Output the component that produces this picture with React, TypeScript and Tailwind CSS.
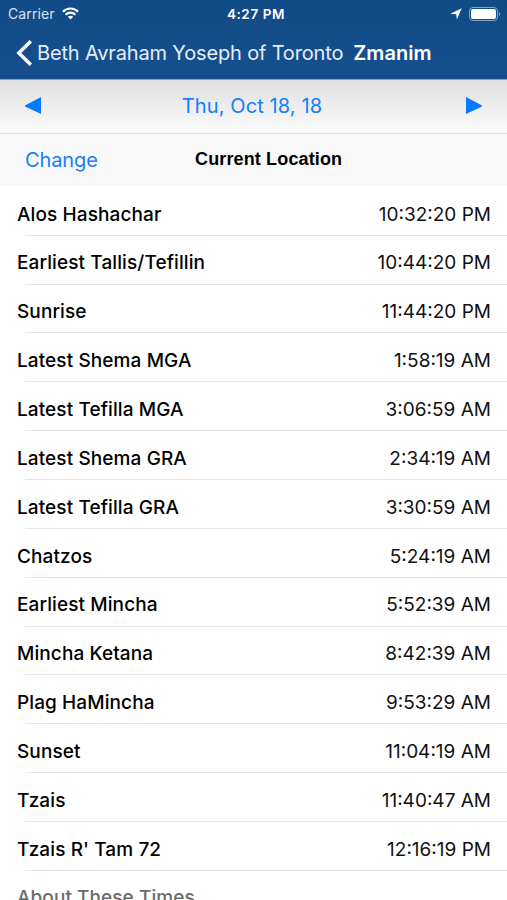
type Zman = {
  name: string;
  time: string;
};

const zmanim: Array<Zman> = [
  { name: "Alos Hashachar", time: "10:32:20 PM" },
  { name: "Earliest Tallis/Tefillin", time: "10:44:20 PM" },
  { name: "Sunrise", time: "11:44:20 PM" },
  { name: "Latest Shema MGA", time: "1:58:19 AM" },
  { name: "Latest Tefilla MGA", time: "3:06:59 AM" },
  { name: "Latest Shema GRA", time: "2:34:19 AM" },
  { name: "Latest Tefilla GRA", time: "3:30:59 AM" },
  { name: "Chatzos", time: "5:24:19 AM" },
  { name: "Earliest Mincha", time: "5:52:39 AM" },
  { name: "Mincha Ketana", time: "8:42:39 AM" },
  { name: "Plag HaMincha", time: "9:53:29 AM" },
  { name: "Sunset", time: "11:04:19 AM" },
  { name: "Tzais", time: "11:40:47 AM" },
  { name: "Tzais R' Tam 72", time: "12:16:19 PM" },
];

const StatusBar = () => {
  return (
    <div className="grid h-[27px] grid-cols-[1fr_auto_1fr] items-center pl-[8px] pr-[6px] text-white">
      <div className="flex items-center gap-[7px]">
        <span className="text-[14px] tracking-[0.1px] text-[#d5e4f5]">Carrier</span>
        <svg className="h-[13px] w-[17px]" viewBox="0 0 17 13" fill="none" stroke="currentColor" strokeWidth="2.2">
          <path d="M.9 4.8C5 .4 12 .4 16.1 4.8" />
          <path d="M3.6 7.8C6.5 4.9 10.5 4.9 13.4 7.8" />
          <path d="M8.5 12.4 5.8 9.7C7.3 8.4 9.7 8.4 11.2 9.7Z" fill="currentColor" stroke="none" />
        </svg>
      </div>
      <span className="pl-[3px] pt-px text-center text-[13.5px] font-semibold tracking-[0.6px]">4:27 PM</span>
      <div className="flex items-center justify-end gap-[7px]">
        <svg className="h-[12px] w-[12px]" viewBox="0 0 12 12" fill="currentColor">
          <path d="M11.7 .3 6.9 11.5 6.2 6.2 .3 5.7Z" />
        </svg>
        <svg className="h-[14px] w-[32px]" viewBox="0 0 32 14">
          <rect x=".5" y=".5" width="28" height="13" rx="3.5" fill="none" stroke="#7fa3cc" />
          <rect x="2" y="2" width="25" height="10" rx="2" fill="#fff" />
          <path d="M30 5V9C31.7 8.4 31.7 5.6 30 5Z" fill="#7fa3cc" />
        </svg>
      </div>
    </div>
  );
};

export default function App() {
  return (
    <div className="h-[900px] w-[507px] overflow-hidden bg-white font-['Inter',sans-serif] text-black">
      <header className="h-[79px] bg-linear-to-b from-[#114b87] to-[#174f8e]">
        <StatusBar />
        <div className="flex h-[51px] items-center pl-4 text-white">
          <svg className="h-[26px] w-[17px]" viewBox="0 0 17 26" fill="none" stroke="currentColor" strokeWidth="3.4">
            <path d="M14.8 1.2 2.8 13 14.8 24.8" />
          </svg>
          <span className="ml-[4px] whitespace-nowrap text-[20px] tracking-[-0.16px] text-[#e3effc]">
            Beth Avraham Yoseph of Toronto
          </span>
          <span className="ml-[10px] text-[20px] font-semibold tracking-[0.05px]">Zmanim</span>
        </div>
      </header>

      <div className="flex h-[55px] items-center justify-between border-b border-t border-b-[#e2e2e2] border-t-[#7ba4d0] bg-linear-to-b from-[#dfdfdf] to-[#f9f9f9] to-90% pb-[2px] pl-[25px] pr-[25px] text-[#147efb]">
        <svg className="h-[18px] w-[16px]" viewBox="0 0 16 18" fill="#057aff">
          <path d="M16 0V17L0 9.5V8.5Z" />
        </svg>
        <span className="pr-[3px] text-[20px] tracking-[0.1px]">Thu, Oct 18, 18</span>
        <svg className="h-[18px] w-[16px]" viewBox="0 0 16 18" fill="#057aff">
          <path d="M0 0V17L16 9.5V8.5Z" />
        </svg>
      </div>

      <div className="grid h-[52px] grid-cols-[169px_auto_1fr] items-center bg-[#f8f8f8]">
        <span className="pl-[25px] text-[20px] tracking-[-0.1px] text-[#147efb]">Change</span>
        <span className="pb-px pl-[26px] font-['Liberation_Sans',sans-serif] text-[18px] font-bold tracking-[0.14px]">
          Current Location
        </span>
      </div>

      <div className="pt-[0.9px]">
        {zmanim.map((zman) => {
          return (
            <div className="flex h-[48.86px] flex-col" key={zman.name}>
              <div className="flex flex-1 items-center justify-between pl-[17px] pr-4 pt-[8px] text-[19px]">
                <span className="font-medium tracking-[0.1px]">{zman.name}</span>
                <span className="text-[#111]">{zman.time}</span>
              </div>
              <div className="ml-[25px] h-px bg-[#e6e6e8]" />
            </div>
          );
        })}
        <div className="pl-[17px] pt-[13px] text-[19px] font-medium tracking-[0.07px] text-[#6b6b6b]">
          About These Times
        </div>
      </div>
    </div>
  );
}
